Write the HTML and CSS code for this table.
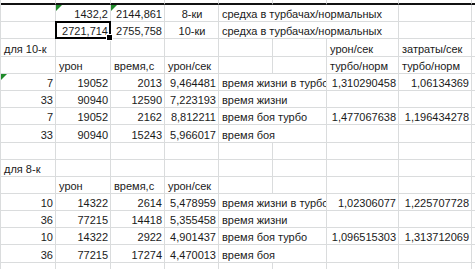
FILE: index.html
```html
<!DOCTYPE html>
<html lang="ru">
<head>
<meta charset="utf-8">
<title>Лист</title>
<link rel="stylesheet" href="styles.css">
</head>
<body>
<div class="sheet">
  <!-- row 0 -->
  <div class="c top"></div><div class="c top"></div><div class="c top"></div><div class="c top"></div><div class="c top"></div><div class="c top"></div><div class="c top"></div><div class="c top"></div><div class="c top"></div>
  <!-- row 1 -->
  <div class="c"></div><div class="c r tri">1432,2</div><div class="c r tri">2144,861</div><div class="c ctr">8-ки</div><div class="c s3">средха в турбачах/нормальных</div><div class="c"></div><div class="c"></div>
  <!-- row 2 -->
  <div class="c"></div><div class="c r sel">2721,714<span class="handle"></span></div><div class="c r">2755,758</div><div class="c ctr">10-ки</div><div class="c s3">средха в турбачах/нормальных</div><div class="c"></div><div class="c"></div>
  <!-- row 3 -->
  <div class="c">для 10-к</div><div class="c"></div><div class="c"></div><div class="c"></div><div class="c"></div><div class="c"></div><div class="c">урон/сек</div><div class="c">затраты/сек</div><div class="c"></div>
  <!-- row 4 -->
  <div class="c"></div><div class="c">урон</div><div class="c">время,с</div><div class="c">урон/сек</div><div class="c"></div><div class="c"></div><div class="c">турбо/норм</div><div class="c">турбо/норм</div><div class="c"></div>
  <!-- row 5 -->
  <div class="c r tri">7</div><div class="c r">19052</div><div class="c r">2013</div><div class="c r">9,464481</div><div class="c s2 clip">время жизни в турбо</div><div class="c r">1,310290458</div><div class="c r">1,06134369</div><div class="c"></div>
  <!-- row 6 -->
  <div class="c r">33</div><div class="c r">90940</div><div class="c r">12590</div><div class="c r">7,223193</div><div class="c s2">время жизни</div><div class="c"></div><div class="c"></div><div class="c"></div>
  <!-- row 7 -->
  <div class="c r">7</div><div class="c r">19052</div><div class="c r">2162</div><div class="c r">8,812211</div><div class="c s2">время боя турбо</div><div class="c r">1,477067638</div><div class="c r">1,196434278</div><div class="c"></div>
  <!-- row 8 -->
  <div class="c r">33</div><div class="c r">90940</div><div class="c r">15243</div><div class="c r">5,966017</div><div class="c s2">время боя</div><div class="c"></div><div class="c"></div><div class="c"></div>
  <!-- row 9 -->
  <div class="c"></div><div class="c"></div><div class="c"></div><div class="c"></div><div class="c"></div><div class="c"></div><div class="c"></div><div class="c"></div><div class="c"></div>
  <!-- row 10 -->
  <div class="c">для 8-к</div><div class="c"></div><div class="c"></div><div class="c"></div><div class="c"></div><div class="c"></div><div class="c"></div><div class="c"></div><div class="c"></div>
  <!-- row 11 -->
  <div class="c"></div><div class="c">урон</div><div class="c">время,с</div><div class="c">урон/сек</div><div class="c"></div><div class="c"></div><div class="c"></div><div class="c"></div><div class="c"></div>
  <!-- row 12 -->
  <div class="c r">10</div><div class="c r">14322</div><div class="c r">2614</div><div class="c r">5,478959</div><div class="c s2 clip">время жизни в турбо</div><div class="c r">1,02306077</div><div class="c r">1,225707728</div><div class="c"></div>
  <!-- row 13 -->
  <div class="c r">36</div><div class="c r">77215</div><div class="c r">14418</div><div class="c r">5,355458</div><div class="c s2">время жизни</div><div class="c"></div><div class="c"></div><div class="c"></div>
  <!-- row 14 -->
  <div class="c r">10</div><div class="c r">14322</div><div class="c r">2922</div><div class="c r">4,901437</div><div class="c s2">время боя турбо</div><div class="c r">1,096515303</div><div class="c r">1,313712069</div><div class="c"></div>
  <!-- row 15 -->
  <div class="c r">36</div><div class="c r">77215</div><div class="c r">17274</div><div class="c r">4,470013</div><div class="c s2">время боя</div><div class="c"></div><div class="c"></div><div class="c"></div>
  <!-- row 16 -->
  <div class="c"></div><div class="c"></div><div class="c"></div><div class="c"></div><div class="c"></div><div class="c"></div><div class="c"></div><div class="c"></div><div class="c"></div>
</div>
</body>
</html>
```
FILE: styles.css
```css
html, body {
  margin: 0;
  padding: 0;
  background: #ffffff;
  overflow: hidden;
}

.sheet {
  display: grid;
  grid-template-columns: 55px 55px 54px 54px 54px 54px 72px 73px 1fr;
  grid-template-rows: 5px 17px 17px 18px 17px 17px 17px 17px 18px 17px 17px 17px 17px 17px 17px 18px 17px;
  border-left: 1px solid #dadcdd;
  font-family: "Liberation Sans", Arial, sans-serif;
  font-size: 11px;
  color: #1a1a1a;
  width: 474px;
}

.c {
  position: relative;
  box-sizing: border-box;
  border-right: 1px solid #dadcdd;
  border-bottom: 1px solid #dadcdd;
  display: flex;
  align-items: flex-end;
  line-height: 14px;
  padding: 0 2px 0 3px;
  white-space: nowrap;
  overflow: visible;
  min-width: 0;
}

.top {
  border-bottom: 2px solid #111111;
}

.r {
  justify-content: flex-end;
}

.ctr {
  justify-content: center;
}

.s2 {
  grid-column: span 2;
}

.s3 {
  grid-column: span 3;
}

.clip {
  overflow: hidden;
  padding-right: 0;
}

.tri::before {
  content: "";
  position: absolute;
  left: 0;
  top: 0;
  border-top: 6px solid #1f8a2a;
  border-right: 6px solid transparent;
}

.sel::after {
  content: "";
  position: absolute;
  left: -1px;
  top: -1px;
  right: -1px;
  bottom: -1px;
  border: 2px solid #000000;
}

.handle {
  position: absolute;
  right: -3px;
  bottom: -3px;
  width: 5px;
  height: 5px;
  background: #000000;
  border: 1px solid #ffffff;
  z-index: 2;
}
```
